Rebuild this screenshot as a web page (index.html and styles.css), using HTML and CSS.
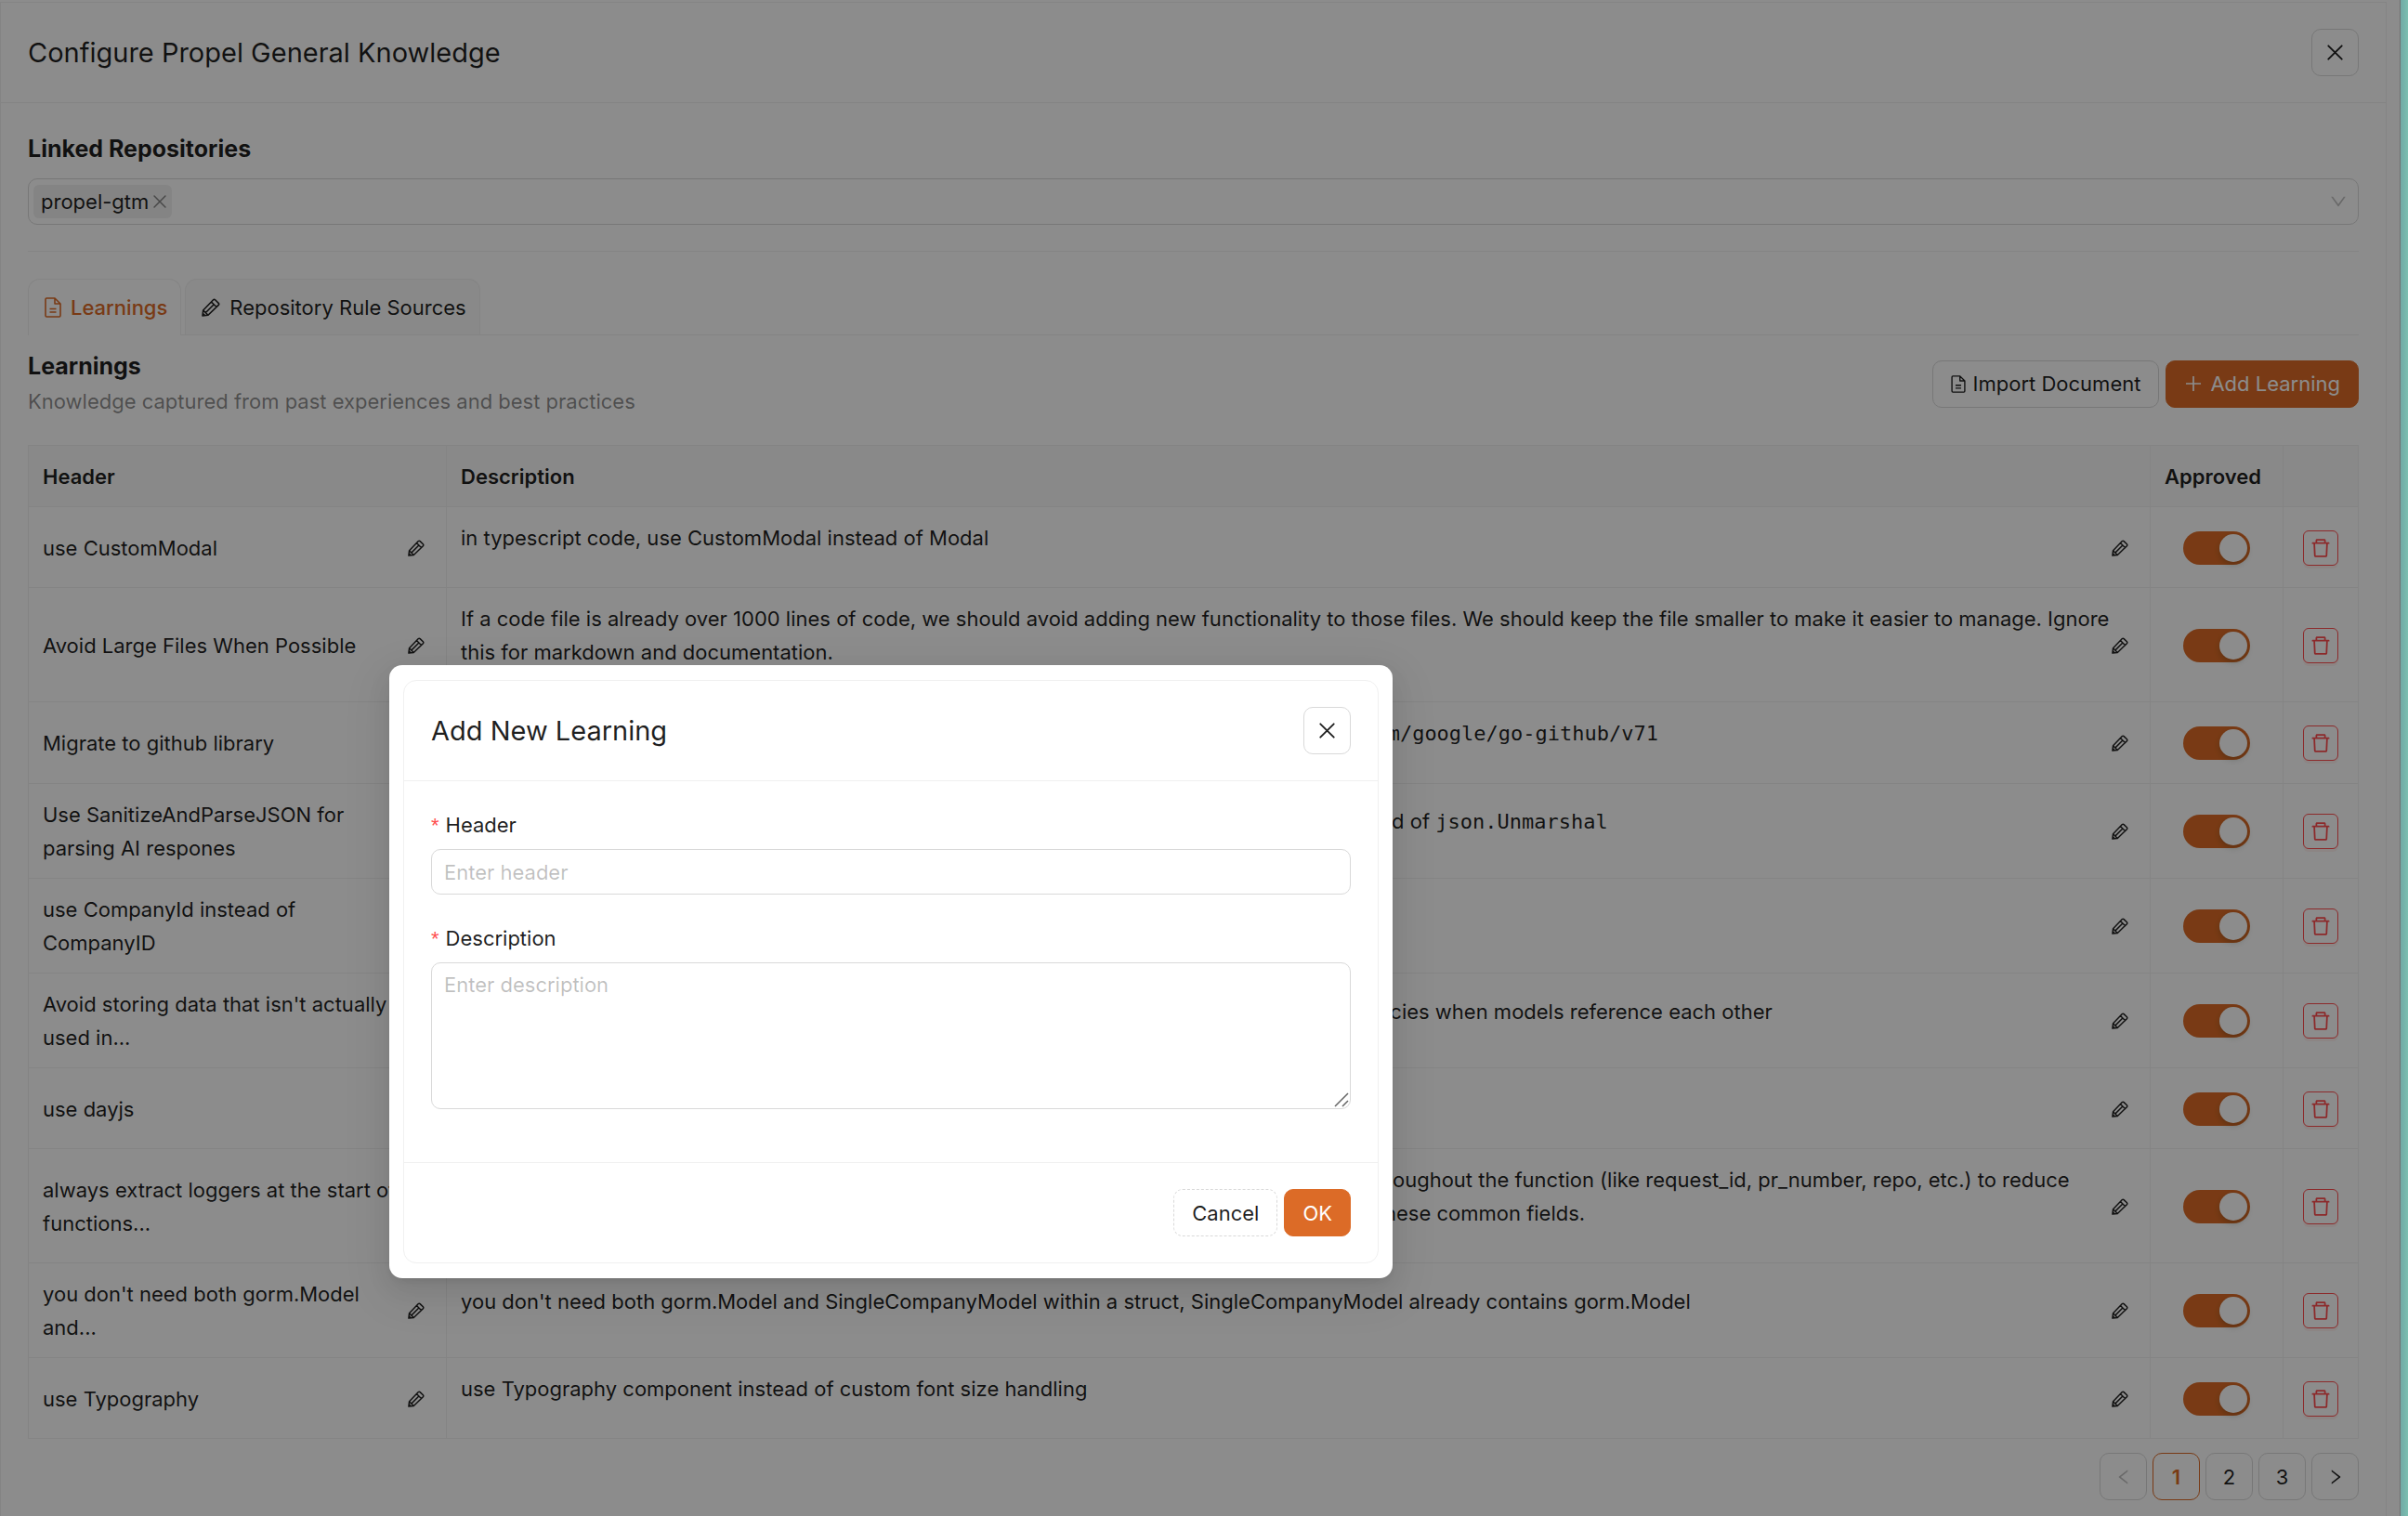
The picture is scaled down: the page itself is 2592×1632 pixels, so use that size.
FILE: index.html
```html
<!DOCTYPE html>
<html lang="en">
<head>
  <meta charset="UTF-8" />
  <meta name="viewport" content="width=device-width, initial-scale=1" />
  <title>Configure Propel General Knowledge</title>
  <link rel="stylesheet" href="styles.css">
</head>
<body>

  <!-- Icon sprite -->
  <svg class="sprite" aria-hidden="true">
    <symbol id="i-close" viewBox="0 0 16 16"><path d="M1.2 1.2l13.6 13.6M14.8 1.2L1.2 14.8" fill="none" stroke="currentColor" stroke-width="1.7" stroke-linecap="round"/></symbol>
    <symbol id="i-doc" viewBox="0 0 18 22"><path d="M1 2.2Q1 1 2.2 1H11l6 6v12.8q0 1.2-1.2 1.2H2.2Q1 21 1 19.800zM11 1v6h6M5.500 12.500h7M5.500 16h7" fill="none" stroke="currentColor" stroke-width="1.600" stroke-linejoin="round"/></symbol>
    <symbol id="i-pencil" viewBox="0 0 20 20"><path d="M1 19l.7-6L12.600 1.800q1-1 2 0l3.600 3.600q1 1 0 2L7 18.300zM1.700 13L7 18.300M10.500 4l5.500 5.500M4.200 15.700L13.200 6.700M1.500 16.500L3.500 18.500" fill="none" stroke="currentColor" stroke-width="1.600" stroke-linejoin="round"/></symbol>
    <symbol id="i-plus" viewBox="64 64 896 896"><path d="M482 152h60q8 0 8 8v704q0 8-8 8h-60q-8 0-8-8V160q0-8 8-8zM160 474h704q8 0 8 8v60q0 8-8 8H160q-8 0-8-8v-60q0-8 8-8z" fill="currentColor"/></symbol>
    <symbol id="i-trash" viewBox="64 64 896 896"><path d="M360 184h-8c4.400 0 8-3.600 8-8v8h304v-8c0 4.400 3.600 8 8 8h-8v72h72v-80c0-35.300-28.700-64-64-64H352c-35.300 0-64 28.700-64 64v80h72v-72zm504 72H160c-17.700 0-32 14.300-32 32v32c0 4.400 3.600 8 8 8h60.400l24.700 523c1.600 34.100 29.800 61 63.900 61h454c34.200 0 62.300-26.800 63.900-61l24.700-523H888c4.400 0 8-3.600 8-8v-32c0-17.700-14.300-32-32-32zM731.300 840H292.700l-24.200-512h487l-24.200 512z" fill="currentColor"/></symbol>
    <symbol id="i-down" viewBox="64 64 896 896"><path d="M884 256h-75c-5.100 0-9.900 2.500-12.900 6.600L512 654.200 227.900 262.600c-3-4.100-7.800-6.600-12.900-6.600h-75c-6.500 0-10.300 7.400-6.500 12.700l352.600 486.100c12.800 17.600 39 17.600 51.700 0l352.600-486.100c3.900-5.300.1-12.700-6.400-12.700z" fill="currentColor"/></symbol>
    <symbol id="i-left" viewBox="64 64 896 896"><path d="M724 218.300V141c0-6.700-7.700-10.400-12.900-6.300L260.300 486.800a31.860 31.860 0 000 50.300l450.800 352.100c5.300 4.100 12.900.4 12.900-6.300v-77.300c0-4.900-2.300-9.600-6.100-12.600l-360-281 360-281.100c3.800-3 6.100-7.700 6.100-12.600z" fill="currentColor"/></symbol>
    <symbol id="i-right" viewBox="64 64 896 896"><path d="M765.700 486.800L314.900 134.700A7.970 7.970 0 00302 141v77.300c0 4.900 2.300 9.600 6.100 12.600l360 281.100-360 281.100c-3.900 3-6.100 7.700-6.100 12.600V883c0 6.700 7.700 10.400 12.900 6.300l450.800-352.100a31.960 31.960 0 000-50.400z" fill="currentColor"/></symbol>
    <symbol id="i-grip" viewBox="0 0 16 16"><path d="M1 15L15 1M9 15L15 9" fill="none" stroke="currentColor" stroke-width="1.500"/></symbol>
  </svg>

  <div class="page">
    <div class="card">
      <header class="card-head">
        <h1 class="title">Configure Propel General Knowledge</h1>
        <button class="btn btn-icon" aria-label="Close"><svg class="icon-x"><use href="#i-close"/></svg></button>
      </header>

      <main class="card-body">
        <h2 class="section-title">Linked Repositories</h2>
        <div class="select">
          <span class="tag">propel-gtm <button class="tag-x" aria-label="Remove propel-gtm"><svg><use href="#i-close"/></svg></button></span>
          <input class="select-input" type="text" role="combobox" aria-expanded="false" aria-label="Linked repositories">
          <svg class="select-arrow"><use href="#i-down"/></svg>
        </div>

        <hr class="divider">

        <div class="tabs" role="tablist">
          <button class="tab active" role="tab" aria-selected="true"><svg class="icon-doc"><use href="#i-doc"/></svg>Learnings</button>
          <button class="tab" role="tab" aria-selected="false"><svg class="icon-edit"><use href="#i-pencil"/></svg>Repository Rule Sources</button>
        </div>

        <div class="toolbar">
          <div>
            <h2 class="section-title">Learnings</h2>
            <p class="muted">Knowledge captured from past experiences and best practices</p>
          </div>
          <div class="toolbar-actions">
            <button class="btn"><svg class="icon-doc small"><use href="#i-doc"/></svg>Import Document</button>
            <button class="btn btn-primary"><svg class="icon-plus"><use href="#i-plus"/></svg>Add Learning</button>
          </div>
        </div>

        <table class="learnings">
          <colgroup>
            <col class="col-header">
            <col>
            <col class="col-approved">
            <col class="col-actions">
          </colgroup>
          <thead>
            <tr>
              <th>Header</th>
              <th>Description</th>
              <th>Approved</th>
              <th></th>
            </tr>
          </thead>
          <tbody id="learningRows"></tbody>
        </table>

        <nav class="pagination" aria-label="Pages">
          <button class="page-btn" disabled aria-label="Previous page"><svg><use href="#i-left"/></svg></button>
          <button class="page-btn current" aria-current="page">1</button>
          <button class="page-btn">2</button>
          <button class="page-btn">3</button>
          <button class="page-btn" aria-label="Next page"><svg><use href="#i-right"/></svg></button>
        </nav>
      </main>
    </div>

    <div class="mask"></div>

    <!-- Modal -->
    <div class="modal" role="dialog" aria-labelledby="modalTitle">
      <form class="modal-card">
        <div class="card-head">
          <h2 class="title" id="modalTitle">Add New Learning</h2>
          <button type="button" class="btn btn-icon" aria-label="Close"><svg class="icon-x"><use href="#i-close"/></svg></button>
        </div>
        <div class="modal-body">
          <div class="field">
            <label for="headerInput">Header</label>
            <input id="headerInput" type="text" placeholder="Enter header">
          </div>
          <div class="field">
            <label for="descInput">Description</label>
            <textarea id="descInput" placeholder="Enter description"></textarea>
            <svg class="grip"><use href="#i-grip"/></svg>
          </div>
        </div>
        <div class="modal-foot">
          <button type="button" class="btn btn-dashed">Cancel</button>
          <button type="button" class="btn btn-primary">OK</button>
        </div>
      </form>
    </div>
  </div>

  <script src="app.js"></script>
</body>
</html>
```
FILE: styles.css
```css
:root {
  --primary: #dc6b27;
  --danger: #ff4d4f;
  --text: rgba(0, 0, 0, 0.88);
  --muted: rgba(0, 0, 0, 0.45);
  --border: #d9d9d9;
  --line: #f0f0f0;
  --fill: #fafafa;
}

* {
  box-sizing: border-box;
}

body {
  margin: 0;
  background: linear-gradient(to left, #7bbfb0, #71a9a5 8px);
  color: var(--text);
  font-family: Inter, "Liberation Sans", sans-serif;
  font-size: 22px;
  line-height: 36px;
}

button,
input,
textarea {
  font: inherit;
  color: inherit;
}

button {
  cursor: pointer;
}

h1, h2, p {
  margin: 0;
}

svg {
  display: block;
  flex: none;
}

.sprite {
  position: absolute;
  width: 0;
  height: 0;
}

.page {
  position: relative;
  min-height: 100vh;
  margin-right: 8px;
  padding: 2px 14px 0 0;
  background: #fff;
  border-right: 1px solid #ccc;
}

.card {
  min-height: calc(100vh - 2px);
  border: 1px solid var(--line);
  border-bottom: none;
}

.card-head {
  display: flex;
  align-items: center;
  justify-content: space-between;
  padding: 28px 29px;
  border-bottom: 1px solid var(--line);
}

.title {
  font-size: 29px;
  font-weight: 400;
}

.card-body {
  padding: 31px 29px 15px;
}

.section-title {
  font-size: 25px;
  font-weight: 700;
}

.muted {
  margin-top: 2px;
  color: var(--muted);
}

/* Buttons */
.btn {
  display: inline-flex;
  align-items: center;
  justify-content: center;
  gap: 8px;
  height: 51px;
  padding: 0 19px;
  background: #fff;
  border: 1px solid var(--border);
  border-radius: 10px;
}

.btn-icon {
  width: 51px;
  padding: 0;
}

.btn-primary {
  background: var(--primary);
  border-color: var(--primary);
  color: #fff;
}

.btn-dashed {
  border-style: dashed;
}

.icon-x {
  width: 17px;
  height: 17px;
}

.icon-doc {
  width: 18px;
  height: 22px;
}

.icon-doc.small {
  width: 16px;
  height: 19px;
}

.icon-edit {
  width: 20px;
  height: 20px;
}

.icon-plus {
  width: 20px;
  height: 20px;
}

/* Repository select */
.select {
  display: flex;
  align-items: center;
  height: 50px;
  margin-top: 14px;
  padding: 0 12px 0 5px;
  border: 1px solid var(--border);
  border-radius: 10px;
}

.tag {
  display: flex;
  align-items: center;
  gap: 5px;
  height: 36px;
  padding: 0 6px 0 8px;
  background: rgba(0, 0, 0, 0.06);
  border-radius: 6px;
}

.tag-x {
  padding: 0;
  background: none;
  border: none;
  color: var(--muted);
}

.tag-x svg {
  width: 14px;
  height: 14px;
}

.select-input {
  flex: 1;
  min-width: 0;
  background: none;
  border: none;
  outline: none;
}

.select-arrow {
  width: 18px;
  height: 18px;
  color: rgba(0, 0, 0, 0.25);
}

.divider {
  height: 1px;
  margin: 28px 0 29px;
  background: var(--line);
  border: none;
}

/* Tabs */
.tabs {
  display: flex;
  gap: 4px;
  border-bottom: 1px solid var(--line);
}

.tab {
  display: flex;
  align-items: center;
  gap: 10px;
  height: 60px;
  padding: 0 14px 0 17px;
  background: var(--fill);
  border: 1px solid var(--line);
  border-bottom: none;
  border-radius: 13px 13px 0 0;
}

.tab.active {
  height: 61px;
  margin-bottom: -1px;
  background: #fff;
  color: var(--primary);
  font-weight: 500;
}

.toolbar {
  display: flex;
  align-items: center;
  justify-content: space-between;
  margin: 15px 0 29px;
}

.toolbar-actions {
  display: flex;
  gap: 7px;
}

/* Table */
.learnings {
  width: 100%;
  table-layout: fixed;
  border-collapse: separate;
  border-spacing: 0;
  border-top: 1px solid var(--line);
  border-left: 1px solid var(--line);
}

.col-header { width: 450px; }
.col-approved { width: 143px; }
.col-actions { width: 81px; }

.learnings th,
.learnings td {
  padding: 15px 15px 14px;
  border-right: 1px solid var(--line);
  border-bottom: 1px solid var(--line);
  text-align: left;
}

.learnings th {
  background: var(--fill);
  font-weight: 600;
}

.cell {
  display: flex;
  align-items: center;
}

.cell-text {
  flex: 1;
  min-width: 0;
}

.cell-text p {
  margin-bottom: 21px;
}

.cell code {
  font-family: "DejaVu Sans Mono", monospace;
  font-size: 22px;
}

.edit-btn {
  width: 26px;
  padding: 0 8px 0 0;
  background: none;
  border: none;
}

.edit-btn svg {
  width: 18px;
  height: 18px;
}

.switch {
  appearance: none;
  display: block;
  width: 72px;
  height: 36px;
  margin: 0 auto;
  padding: 3px;
  background: #bfbfbf;
  border-radius: 18px;
  cursor: pointer;
}

.switch::before {
  content: "";
  display: block;
  width: 30px;
  height: 30px;
  background: #fff;
  border-radius: 50%;
  box-shadow: 0 3px 6px rgba(0, 35, 11, 0.2);
}

.switch:checked {
  background: var(--primary);
}

.switch:checked::before {
  margin-left: auto;
}

.delete-btn {
  display: flex;
  align-items: center;
  justify-content: center;
  width: 38px;
  height: 38px;
  margin: 0 auto;
  padding: 0;
  background: #fff;
  border: 1px solid var(--danger);
  border-radius: 6px;
  box-shadow: 0 3px 0 rgba(255, 38, 5, 0.06);
  color: var(--danger);
}

.delete-btn svg {
  width: 22px;
  height: 22px;
}

/* Pagination */
.pagination {
  display: flex;
  justify-content: flex-end;
  gap: 6px;
  margin-top: 15px;
}

.page-btn {
  display: flex;
  align-items: center;
  justify-content: center;
  width: 51px;
  height: 51px;
  padding: 0;
  background: #fff;
  border: 1px solid var(--border);
  border-radius: 10px;
}

.page-btn svg {
  width: 18px;
  height: 18px;
}

.page-btn:disabled {
  color: rgba(0, 0, 0, 0.25);
}

.page-btn.current {
  border-color: var(--primary);
  color: var(--primary);
  font-weight: 600;
}

/* Modal */
.mask {
  position: absolute;
  inset: 0 -1px 0 0;
  background: rgba(0, 0, 0, 0.45);
}

.modal {
  position: absolute;
  top: 716px;
  left: 419px;
  width: 1080px;
  padding: 16px 15px;
  background: #fff;
  border-radius: 14px;
  box-shadow: 0 10px 26px rgba(0, 0, 0, 0.08), 0 5px 10px -6px rgba(0, 0, 0, 0.12), 0 15px 46px 13px rgba(0, 0, 0, 0.05);
}

.modal-card {
  border: 1px solid var(--line);
  border-radius: 14px;
}

.modal-body {
  padding: 29px 29px 28px;
}

.field {
  position: relative;
  margin-bottom: 29px;
}

.field label {
  display: block;
  margin-bottom: 8px;
}

.field label::before {
  content: "*";
  margin-right: 7px;
  color: var(--danger);
  font-family: "Liberation Sans", sans-serif;
  line-height: 1;
}

.field input,
.field textarea {
  display: block;
  width: 100%;
  height: 49px;
  padding: 5px 13px;
  background: #fff;
  border: 1px solid var(--border);
  border-radius: 10px;
}

.field textarea {
  height: 158px;
  resize: vertical;
}

.field textarea::-webkit-resizer {
  background: transparent;
}

.grip {
  position: absolute;
  right: 2px;
  bottom: 2px;
  width: 16px;
  height: 16px;
  color: #666;
  pointer-events: none;
}

.field ::placeholder {
  color: rgba(0, 0, 0, 0.25);
}

.modal-foot {
  display: flex;
  justify-content: flex-end;
  gap: 7px;
  padding: 28px 29px;
  border-top: 1px solid var(--line);
}
```
FILE: app.js
```js
const learnings = [
  { header: "use CustomModal", description: "in typescript code, use CustomModal instead of Modal" },
  { header: "Avoid Large Files When Possible", description: "If a code file is already over 1000 lines of code, we should avoid adding new functionality to those files. We should keep the file smaller to make it easier to manage. Ignore this for markdown and documentation." },
  { header: "Migrate to github library", description: "When working with the GitHub API in our backend services, always import the latest <code>github.com/google/go-github/v71</code>" },
  { header: "Use SanitizeAndParseJSON for parsing AI respones", description: "When parsing JSON that comes out from AI model, use the SanitizeAndParseJSON helper instead of <code>json.Unmarshal</code>" },
  { header: "use CompanyId instead of CompanyID", description: "use CompanyId instead of CompanyID when naming variables and fields" },
  { header: "Avoid storing data that isn't actually used in...", description: "Avoid storing data that isn't actually used in the database, as this could cause circular dependencies when models reference each other" },
  { header: "use dayjs", description: "use dayjs instead of moment or the native Date object" },
  { header: "always extract loggers at the start of functions...", description: "always extract loggers at the start of functions from the context and add common fields used throughout the function (like request_id, pr_number, repo, etc.) to reduce duplication. This keeps the log lines short, so any log statement within the function will include these common fields." },
  { header: "you don't need both gorm.Model and...", description: "you don't need both gorm.Model and SingleCompanyModel within a struct, SingleCompanyModel already contains gorm.Model" },
  { header: "use Typography", description: "use Typography component instead of custom font size handling" }
];

function editButton(label) {
  return `<button class="edit-btn" aria-label="Edit ${label}"><svg><use href="#i-pencil"/></svg></button>`;
}

document.getElementById("learningRows").innerHTML = learnings.map(l => `
  <tr>
    <td><div class="cell"><div class="cell-text">${l.header}</div>${editButton("header")}</div></td>
    <td><div class="cell"><div class="cell-text"><p>${l.description}</p></div>${editButton("description")}</div></td>
    <td><input class="switch" type="checkbox" role="switch" aria-label="Approved" checked></td>
    <td><button class="delete-btn" aria-label="Delete"><svg><use href="#i-trash"/></svg></button></td>
  </tr>
`).join("");
```
